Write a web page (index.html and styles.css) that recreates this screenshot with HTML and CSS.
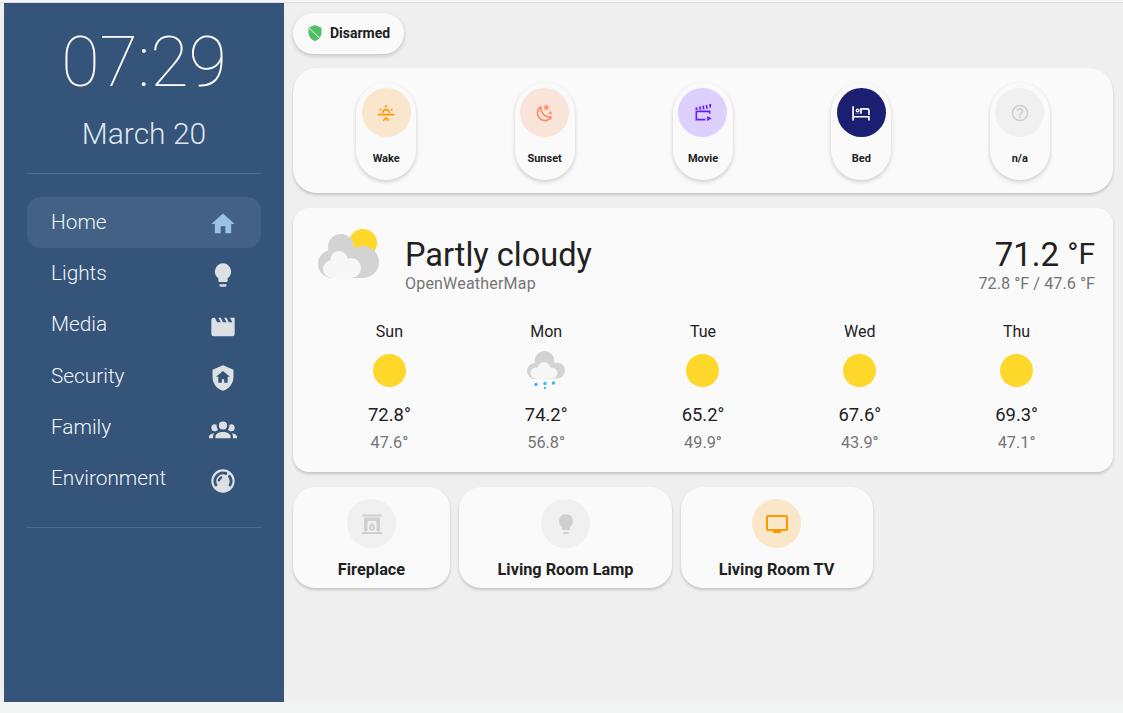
FILE: index.html
```html
<!DOCTYPE html>
<html lang="en">
<head>
<meta charset="utf-8">
<title>Home</title>
<link rel="stylesheet" href="styles.css">
</head>
<body>
<div class="app">
  <aside class="sidebar">
    <div class="clock">07:29</div>
    <div class="date">March 20</div>
    <nav class="nav">
      <a class="nav-item active"><span>Home</span><svg class="nav-icon home-icon" viewBox="0 0 24 24"><path d="M10,20V14H14V20H19V12H22L12,3L2,12H5V20H10Z"/></svg></a>
      <a class="nav-item"><span>Lights</span><svg class="nav-icon" viewBox="0 0 24 24"><path d="M12,2A7,7 0 0,0 5,9C5,11.38 6.19,13.47 8,14.74V17A1,1 0 0,0 9,18H15A1,1 0 0,0 16,17V14.74C17.81,13.47 19,11.38 19,9A7,7 0 0,0 12,2M9,21A1,1 0 0,0 10,22H14A1,1 0 0,0 15,21V20H9V21Z"/></svg></a>
      <a class="nav-item"><span>Media</span><svg class="nav-icon" viewBox="0 0 24 24"><path d="M18,4L20,8H17L15,4H13L15,8H12L10,4H8L10,8H7L5,4H4A2,2 0 0,0 2,6V18A2,2 0 0,0 4,20H20A2,2 0 0,0 22,18V4H18Z"/></svg></a>
      <a class="nav-item"><span>Security</span><svg class="nav-icon" viewBox="0 0 24 24"><path d="M11 13H13V16H16V11H18L12 6L6 11H8V16H11V13M12 1L21 5V11C21 16.55 17.16 21.74 12 23C6.84 21.74 3 16.55 3 11V5L12 1Z"/></svg></a>
      <a class="nav-item"><span>Family</span><svg class="nav-icon" viewBox="0 0 24 24"><path d="M12,5.5A3.5,3.5 0 0,1 15.5,9A3.5,3.5 0 0,1 12,12.5A3.5,3.5 0 0,1 8.5,9A3.5,3.5 0 0,1 12,5.5M5,8C5.56,8 6.08,8.15 6.53,8.42C6.38,9.85 6.8,11.27 7.66,12.38C7.16,13.34 6.16,14 5,14A3,3 0 0,1 2,11A3,3 0 0,1 5,8M19,8A3,3 0 0,1 22,11A3,3 0 0,1 19,14C17.84,14 16.84,13.34 16.34,12.38C17.2,11.27 17.62,9.85 17.47,8.42C17.92,8.15 18.44,8 19,8M5.5,18.25C5.5,16.18 8.41,14.5 12,14.5C15.59,14.5 18.5,16.18 18.5,18.25V20H5.5V18.25M0,20V18.5C0,17.11 1.89,15.94 4.45,15.6C3.86,16.28 3.5,17.22 3.5,18.25V20H0M24,20H20.5V18.25C20.5,17.22 20.14,16.28 19.55,15.6C22.11,15.94 24,17.11 24,18.5V20Z"/></svg></a>
      <a class="nav-item"><span>Environment</span><svg class="nav-icon" viewBox="0 0 24 24"><circle cx="12" cy="12" r="10"/><path class="gauge-cut" d="M6,15.500A7,7 0 0,1 14.500,5.500"/><path class="gauge-cut" d="M17.500,8A7,7 0 0,1 18,15.500"/><path class="gauge-cut gauge-tick" d="M8.500,11.500A4,4 0 0,1 10.500,9"/></svg></a>
    </nav>
  </aside>
  <main class="main">
    <div class="badge-row">
      <div class="badge">
        <svg class="badge-icon" viewBox="0 0 18 18"><path class="shield" d="M9,1L15.500,3.800V8.500C15.500,12.400 12.700,16 9,17C5.300,16 2.500,12.400 2.500,8.500V3.800L9,1Z"/><path class="shield-slit" d="M2,3L16,16.500"/></svg>
        <span>Disarmed</span>
      </div>
    </div>
    <section class="card scenes">
      <div class="scene-cell"><div class="scene">
        <div class="disc disc-wake"><svg class="scene-icon" viewBox="0 0 24 24"><path d="M2,13H22V15H2V13M7,12A5,5 0 0,1 17,12H15A3,3 0 0,0 9,12H7M12,2L14,5.200H10L12,2M3.500,7L7,7.300L5.400,9.600L3.500,7M20.500,7L18.600,9.600L17,7.300L20.500,7M12,16.500L16,20.500L14.600,21.900L12,19.300L9.400,21.900L8,20.500L12,16.500Z"/></svg></div>
        <div class="scene-name">Wake</div>
      </div></div>
      <div class="scene-cell"><div class="scene">
        <div class="disc disc-sunset"><svg class="scene-icon" viewBox="0 0 24 24"><path d="M17.75,4.09L15.22,6.03L16.13,9.09L13.5,7.28L10.87,9.09L11.78,6.03L9.25,4.09L12.44,4L13.5,1L14.56,4L17.75,4.09M21.25,11L19.61,12.25L20.2,14.23L18.5,13.06L16.8,14.23L17.39,12.25L15.75,11L17.81,10.95L18.5,9L19.19,10.95L21.25,11M18.97,15.95C19.8,15.87 20.69,17.05 20.16,17.8C19.84,18.25 19.5,18.67 19.08,19.07C15.17,23 8.84,23 4.94,19.07C1.03,15.17 1.03,8.83 4.94,4.93C5.34,4.53 5.76,4.17 6.21,3.85C6.96,3.32 8.14,4.21 8.06,5.04C7.79,7.9 8.75,10.87 10.95,13.06C13.14,15.26 16.1,16.22 18.97,15.95M17.33,17.97C14.5,17.81 11.7,16.64 9.53,14.5C7.36,12.31 6.2,9.5 6.04,6.68C3.23,9.82 3.34,14.64 6.35,17.66C9.37,20.67 14.19,20.78 17.33,17.97Z"/></svg></div>
        <div class="scene-name">Sunset</div>
      </div></div>
      <div class="scene-cell"><div class="scene">
        <div class="disc disc-movie"><svg class="scene-icon" viewBox="0 0 24 24"><path d="M3,5.500L5,5L5.800,8H3V5.500M7,4.600L9,4L10,8H8L7,4.600M11,3.600L13,3L14,7.500H12L11,3.600M15,2.600L17,2L18,7H16L15,2.600M19,1.700L22,1L21.500,5L20.500,6.500L19,1.700M3,9H21V13H19V11H5V19H15V21H3V9M17,15.500L22.500,18.500L17,21.500V15.500Z"/></svg></div>
        <div class="scene-name">Movie</div>
      </div></div>
      <div class="scene-cell"><div class="scene">
        <div class="disc disc-bed"><svg class="scene-icon" viewBox="0 0 24 24"><path fill-rule="evenodd" d="M1.500,4H3.500V15.500H22.500V21H20.500V17.500H3.500V21H1.500V4M8,6.500A2.500,2.500 0 1,1 8,11.500A2.500,2.500 0 1,1 8,6.500M8,8.200A0.800,0.800 0 1,0 8,9.800A0.800,0.800 0 1,0 8,8.200M11,6H19.500A3,3 0 0,1 22.500,9V14.500H20.500V9A1,1 0 0,0 19.500,8H13V13H5V12.500H11V6Z"/></svg></div>
        <div class="scene-name">Bed</div>
      </div></div>
      <div class="scene-cell"><div class="scene">
        <div class="disc disc-off"><svg class="scene-icon" viewBox="0 0 24 24"><path d="M11,18H13V16H11V18M12,2A10,10 0 0,0 2,12A10,10 0 0,0 12,22A10,10 0 0,0 22,12A10,10 0 0,0 12,2M12,20C7.59,20 4,16.41 4,12C4,7.59 7.59,4 12,4C16.41,4 20,7.59 20,12C20,16.41 16.41,20 12,20M12,6A4,4 0 0,0 8,10H10A2,2 0 0,1 12,8A2,2 0 0,1 14,10C14,12 11,11.75 11,15H13C13,12.75 16,12.5 16,10A4,4 0 0,0 12,6Z"/></svg></div>
        <div class="scene-name">n/a</div>
      </div></div>
    </section>
    <section class="card weather">
      <div class="weather-head">
        <svg class="weather-big" viewBox="0 0 61 49">
          <circle class="sun" cx="45" cy="14" r="14"/>
          <g class="cloud"><circle cx="23" cy="18" r="13"/><circle cx="45" cy="33" r="16"/><circle cx="14" cy="35" r="14"/><rect x="14" y="20" width="31" height="29"/></g>
          <g class="cloud-in"><circle cx="21" cy="30.500" r="8.500"/><circle cx="14" cy="40" r="9"/><circle cx="33" cy="39" r="10"/><rect x="14" y="34" width="19" height="15"/></g>
        </svg>
        <div class="weather-title">
          <div class="condition">Partly cloudy</div>
          <div class="provider">OpenWeatherMap</div>
        </div>
        <div class="weather-temp">
          <div class="temp-now">71.2 <span class="temp-unit">°F</span></div>
          <div class="temp-range">72.8 °F / 47.6 °F</div>
        </div>
      </div>
      <div class="forecast">
        <div class="day"><div class="day-name">Sun</div><div class="day-icon"><div class="sun-disc"></div></div><div class="day-high">72.8°</div><div class="day-low">47.6°</div></div>
        <div class="day"><div class="day-name">Mon</div><div class="day-icon"><svg class="rain" viewBox="0 0 38 38">
          <g class="cloud"><circle cx="17.500" cy="10" r="10"/><circle cx="30" cy="19.500" r="8"/><circle cx="8" cy="20" r="8"/><rect x="8" y="14" width="22" height="13.500"/></g>
          <g class="cloud-in"><circle cx="17" cy="17.500" r="6.500"/><circle cx="9" cy="22" r="5.500"/><circle cx="25" cy="22" r="5.500"/><rect x="9" y="20" width="16" height="7.500"/></g>
          <g class="drop"><circle cx="9" cy="33.500" r="1.800"/><circle cx="18" cy="32.500" r="1.800"/><circle cx="26.500" cy="32" r="1.800"/><circle cx="18" cy="37" r="1.200"/></g>
        </svg></div><div class="day-high">74.2°</div><div class="day-low">56.8°</div></div>
        <div class="day"><div class="day-name">Tue</div><div class="day-icon"><div class="sun-disc"></div></div><div class="day-high">65.2°</div><div class="day-low">49.9°</div></div>
        <div class="day"><div class="day-name">Wed</div><div class="day-icon"><div class="sun-disc"></div></div><div class="day-high">67.6°</div><div class="day-low">43.9°</div></div>
        <div class="day"><div class="day-name">Thu</div><div class="day-icon"><div class="sun-disc"></div></div><div class="day-high">69.3°</div><div class="day-low">47.1°</div></div>
      </div>
    </section>
    <div class="tiles">
      <div class="card tile tile-fire">
        <div class="disc disc-off"><svg class="tile-icon" viewBox="0 0 24 24"><path fill-rule="evenodd" d="M2,2.500H22V4.500H2V2.500M4,5.500H20V19H4V5.500M7.500,9V19H16.500V9H7.500M12,10.500C13,12.500 15,13.500 15,15.500A3,3 0 0,1 9,15.500C9,13.500 11,12.500 12,10.500M12,14C11.500,14.800 11,15.200 11,16A1,1 0 0,0 13,16C13,15.200 12.500,14.800 12,14M2,20H22V22H2V20Z"/></svg></div>
        <div class="tile-name">Fireplace</div>
      </div>
      <div class="card tile tile-lamp">
        <div class="disc disc-off"><svg class="tile-icon" viewBox="0 0 24 24"><path d="M12,2A7,7 0 0,0 5,9C5,11.38 6.19,13.47 8,14.74V17A1,1 0 0,0 9,18H15A1,1 0 0,0 16,17V14.74C17.81,13.47 19,11.38 19,9A7,7 0 0,0 12,2M9,21A1,1 0 0,0 10,22H14A1,1 0 0,0 15,21V20H9V21Z"/></svg></div>
        <div class="tile-name">Living Room Lamp</div>
      </div>
      <div class="card tile tile-tv">
        <div class="disc disc-tv"><svg class="tile-icon" viewBox="0 0 24 24"><path d="M21,17H3V5H21M21,3H3A2,2 0 0,0 1,5V17A2,2 0 0,0 3,19H8V21H16V19H21A2,2 0 0,0 23,17V5A2,2 0 0,0 21,3Z"/></svg></div>
        <div class="tile-name">Living Room TV</div>
      </div>
    </div>
  </main>
</div>
</body>
</html>
```

FILE: styles.css
```css
* { box-sizing: border-box; }
html, body { margin: 0; height: 100%; overflow: hidden; }
body { background: #f3f5f5; font-family: Roboto, "Liberation Sans", sans-serif; color: #212121; }
.app { display: flex; height: 700px; margin-top: 2px; border-top: 1px solid #dedede; padding-left: 4px; background: #efefef; }

.sidebar { width: 280px; flex: none; background: #345479; padding: 0 23px; color: #fff; }
.clock { text-align: center; font-size: 70px; line-height: 82px; font-weight: 100; margin-top: 18px; color: #fff; }
.date { text-align: center; font-size: 30px; line-height: 36px; font-weight: 300; margin-top: 13px; color: #dfe5ec; }
.nav { margin-top: 21px; padding: 23px 0 22px; border-top: 1px solid #4a6b92; border-bottom: 1px solid #4a6b92; }
.nav-item { display: flex; align-items: center; justify-content: space-between; height: 51.300px; padding: 0 24px 2px; border-radius: 14px; font-size: 20.800px; font-weight: 300; color: #f1f4f7; }
.nav-item.active { background: #426184; }
.nav-icon { width: 28px; height: 28px; fill: #dde1e3; margin-right: 0; margin-top: 5px; }
.home-icon { fill: #9cc2e3; }
.gauge-cut { fill: none; stroke: #345479; stroke-width: 2.400; stroke-linecap: round; }
.gauge-tick { stroke-width: 2; }

.main { flex: 1; min-width: 0; padding: 10px 10px 0 9px; }
.badge-row { display: flex; }
.badge { display: flex; align-items: center; height: 41px; padding: 0 14px 2px 13px; gap: 6px; border-radius: 21px; background: #fafafa; box-shadow: 0 2px 4px rgba(0,0,0,.18); font-size: 14px; font-weight: 700; }
.badge-icon { width: 18px; height: 18px; }
.shield { fill: #4cc064; }
.shield-slit { stroke: #fafafa; stroke-width: 1; }

.card { background: #fafafa; box-shadow: 0 2px 3px rgba(0,0,0,.18); }
.scenes { display: grid; grid-template-columns: repeat(5, 1fr); margin-top: 14px; height: 125px; padding: 15px 14px 0; border-radius: 24px; }
.scene-cell { display: flex; justify-content: center; }
.scene { width: 60px; height: 97px; padding-top: 5px; border-radius: 30px; background: #fafafa; box-shadow: 0 2px 4px rgba(0,0,0,.18); display: flex; flex-direction: column; align-items: center; }
.disc { width: 49px; height: 49px; border-radius: 50%; display: flex; align-items: center; justify-content: center; flex: none; }
.scene-icon { width: 20px; height: 20px; }
.scene-name { margin-top: 15px; font-size: 11px; line-height: 14px; font-weight: 700; }
.disc-wake { background: #fae6cc; fill: #ff9800; }
.disc-sunset { background: #fae3d8; fill: #ff8a65; }
.disc-movie { background: #ddd0ff; fill: #651fff; }
.disc-bed { background: #1a1f71; fill: #fff; }
.disc-off { background: #f0f0f0; fill: #cfcfcf; }
.disc-tv { background: #fae6c9; fill: #ff9800; }

.weather { margin-top: 15px; height: 264px; padding: 21px 18px 0; border-radius: 16px; }
.weather-head { display: flex; align-items: flex-start; }
.weather-big { width: 61px; height: 49px; flex: none; margin-left: 7px; }
.sun { fill: #fdd82b; }
.cloud { fill: #d3d3d3; }
.cloud-in { fill: #f7f7f7; }
.drop { fill: #4db6f5; }
.weather-title { margin-left: 26px; flex: 1; padding-top: 8px; }
.condition { font-size: 32.500px; line-height: 36px; }
.provider { margin-top: 1px; font-size: 16px; line-height: 20px; color: #757575; letter-spacing: .2px; }
.weather-temp { text-align: right; padding-top: 7px; }
.temp-now { font-size: 33px; line-height: 36px; }
.temp-unit { font-size: 30px; vertical-align: 2px; }
.temp-range { margin-top: 1px; font-size: 16.300px; line-height: 20px; color: #757575; }
.forecast { display: grid; grid-template-columns: repeat(5, 1fr); margin-top: 28px; text-align: center; }
.day-name { font-size: 16px; line-height: 20px; }
.day-icon { height: 38px; margin-top: 9px; display: flex; justify-content: center; align-items: center; }
.sun-disc { width: 33px; height: 33px; border-radius: 50%; background: #fdd82b; }
.rain { width: 38px; height: 38px; }
.day-high { margin-top: 14px; font-size: 18.400px; line-height: 24px; }
.day-low { margin-top: 6px; font-size: 16.300px; line-height: 20px; color: #757575; }

.tiles { display: flex; gap: 9px; margin-top: 15px; }
.tile { height: 101px; padding-top: 12px; border-radius: 22px; display: flex; flex-direction: column; align-items: center; }
.tile-fire { width: 157px; }
.tile-lamp { width: 213px; }
.tile-tv { width: 192px; padding-right: 1px; }
.tile-icon { width: 24px; height: 24px; }
.tile-name { margin-top: 11px; font-size: 16.300px; line-height: 22px; font-weight: 700; }
```
